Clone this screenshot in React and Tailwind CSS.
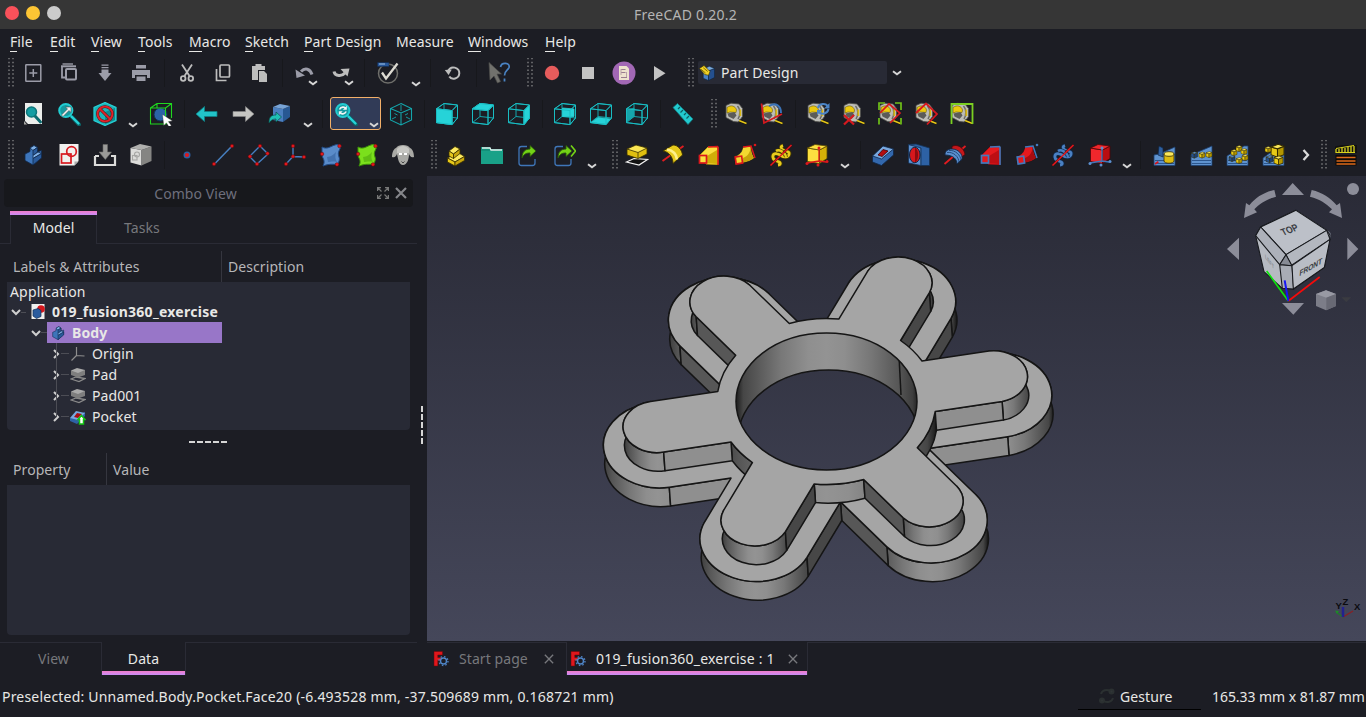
import React from "react";

const C = "#26d3d8";
const CD = "#14a5ab";

/* ---------- shared icon pieces (24x24 grid) ---------- */
const Wire = ({ face, hi = C }) => (
  <>
    <g fill="none" stroke={CD} strokeWidth="1">
      <path d="M9 1.500 22.500 3v13L9 14.500z" />
      <path d="M1.500 6.800 17 8.600v14L1.500 20.600zM1.500 6.800 9 1.500M17 8.600 22.500 3M17 22.600l5.500-6.600M1.500 20.600 9 14.500" />
    </g>
    {face && <path d={face} fill={hi} stroke={hi} strokeWidth=".8" />}
    <path d="M1.500 6.800 17 8.600v14L1.500 20.600zM1.500 6.800 9 1.500 22.500 3 17 8.600M22.500 3v13L17 22.600" fill="none" stroke="#19bcc2" strokeWidth="1" />
  </>
);

const Tape = () => (
  <>
    <path d="M2 3.500 7 1.200l8 .8 3.500 4.500v8l-4 5.500-5-.5-7.500-4z" fill="#bdbdb8" stroke="#4c4c47" strokeWidth=".8" />
    <path d="M3 5.500c4-3 8.500-1.500 9.500 2.500l-.5 2.500-6-.5-3 1z" fill="#ecc90f" stroke="#6b5c00" strokeWidth=".6" />
    <path d="M3.500 11.500l7-1.500 2 3.500-3 3.500-5-2.500z" fill="#5b5b58" />
    <path d="M13.500 4c3 3 3 9 .5 13" fill="none" stroke="#6b6b64" strokeWidth="1.500" />
    <path d="M16.300 7.500v6.500" stroke="#d8b610" strokeWidth="1.700" />
    <path d="M15 18.500l7.500 3" stroke="#16150a" strokeWidth="2.800" />
    <path d="M15 18.500l7.500 3" stroke="#e5c619" strokeWidth="1.500" />
  </>
);

const Step = ({ a, b, c, s }) => (
  <g stroke={s} strokeWidth=".8" strokeLinejoin="round">
    <path d="M4 11 9 8.500V5l4-2.500 3.500 2V9l4-1.500V14L12 22l-8-4.500z" fill={b} />
    <path d="M9 5l4-2.500 3.500 2-4.500 3z" fill={a} />
    <path d="M12 7.500l4.500-3V9L12 12.500z" fill={c} />
    <path d="M12 12.500 17 9l3.500 1.500L12 15.500z" fill={a} />
    <path d="M12 15.500l8.500-5V15L12 22z" fill={c} />
  </g>
);

const Bricks = () => (
  <g stroke="#3a3000" strokeWidth=".8" strokeLinejoin="round">
    <path d="M3.500 15 14 9.500l6.500 4L11 19z" fill="#fdea60" />
    <path d="M3.500 15l7.500 4v4l-7.500-4z" fill="#e8c91a" />
    <path d="M11 19l9.500-5.500v4L11 23z" fill="#c9a70c" />
    <path d="M5 8 11 3.500l5 2.500-6.500 5z" fill="#fdea60" />
    <path d="M5 8l4.500 3v4.500L5 13z" fill="#e8c91a" />
    <path d="M9.500 11 16 6v4.500l-6.500 5z" fill="#c9a70c" />
  </g>
);

const BlueCube = () => (
  <g stroke="#0d2038" strokeWidth=".7">
    <path d="M7 7l7 2v13l-7-3z" fill="#4b82c5" />
    <path d="M14 9l8-3v12l-8 4z" fill="#24508f" />
    <path d="M7 7l8-4 7 3-8 3z" fill="#7aa9dc" />
  </g>
);

const Glass = () => (
  <>
    <path d="M15 15l7 7.500" stroke="#0b6367" strokeWidth="4" strokeLinecap="round" />
    <path d="M14.500 14.500l7 7" stroke={C} strokeWidth="2.400" strokeLinecap="round" />
    <circle cx="8.800" cy="8.500" r="6.600" fill="#149aa0" stroke="#22cdd2" strokeWidth="2" />
  </>
);

const No = ({ x = 12, y = 12, r = 8 }) => (
  <g fill="none" stroke="#e0242b" strokeWidth="1.900">
    <circle cx={x} cy={y} r={r} stroke="#5e090b" strokeWidth="2.900" />
    <path d={`M${x - r * 0.7} ${y - r * 0.7}L${x + r * 0.7} ${y + r * 0.7}`} stroke="#5e090b" strokeWidth="2.900" />
    <circle cx={x} cy={y} r={r} />
    <path d={`M${x - r * 0.7} ${y - r * 0.7}L${x + r * 0.7} ${y + r * 0.7}`} />
  </g>
);

const Pt = ({ x, y, r = 1.8 }) => <circle cx={x} cy={y} r={r} fill="#e3171c" stroke="#5c0608" strokeWidth=".5" />;

const SmallCube = ({ x, y, s, a = "#fbe75a", b = "#e8c916", c = "#b39600" }) => (
  <g transform={`translate(${x} ${y}) scale(${s})`} stroke="#332a00" strokeWidth=".8">
    <path d="M0 3l5 1.500V11L0 9z" fill={b} />
    <path d="M5 4.500 10 2.500V9l-5 2z" fill={c} />
    <path d="M0 3 5.500 1 10 2.500 5 4.500z" fill={a} />
  </g>
);

const PatBase = ({ d = "M1 13l21-10v20H1z" }) => <path d={d} fill="#5f93cf" stroke="#1c3f70" strokeWidth=".8" />;
const patStripes = <path d="M2 20.500h19M2 17.500h19" stroke="#264f86" strokeWidth=".9" />;

const Loft = ({ fill, side, line }) => (
  <>
    <path d="M2 13 11 4h10v17.500L9 21z" fill={fill} stroke={side} strokeWidth=".8" />
    <path d="M10 13 20 7v14L10 20z" fill={side} />
    <path d="M21 3.500v18.500M11 4l10-.5" stroke={line} strokeWidth="1.600" />
    <rect x="2.500" y="12.500" width="7" height="7.500" fill={fill} stroke={line} strokeWidth="1.700" />
  </>
);

const Dot = ({ x, y, c }) => <circle cx={x} cy={y} r="1.300" fill={c} />;
const Pipe = ({ fill, side, line }) => (
  <>
    <path d="M2 13C8 12 9 7 10 4L18 3c0 6 2 9 3 12-2 2-6 4-12 5l-7 1z" fill={fill} stroke="#151515" strokeWidth=".7" />
    <path d="M10 15C16 13 17 8 18 4c0 6 1 8 3 11-3 2-7 4-11 4.500z" fill={side} />
    <rect x="2.500" y="13.500" width="6.500" height="7" fill={fill} stroke={line} strokeWidth="1.700" transform="rotate(-8 6 16)" />
    <path d="M10 4 18 3l4 12" fill="none" stroke={line} strokeWidth="1.500" />
    <Dot x={22} y={2} c={line} />
  </>
);

const Helix = ({ c, d }) => (
  <>
    <g fill="none">
      <path d="M14 2.500c-3 1-2 4 1 5s6 1 5 4-5 3-8 1-7-3-8 0 2 5 5 6 3 3 0 3.500" stroke={d} strokeWidth="4.400" />
      <path d="M14 2.500c-3 1-2 4 1 5s6 1 5 4-5 3-8 1-7-3-8 0 2 5 5 6 3 3 0 3.500" stroke={c} strokeWidth="2.800" />
      <path d="M7 8c3-2 9 1 10 6" stroke={d} strokeWidth="3.800" />
      <path d="M7 8c3-2 9 1 10 6" stroke={c} strokeWidth="2.400" />
    </g>
    <path d="M1.500 22.500 10 14M14 10l8.500-8" stroke="#560709" strokeWidth="2.200" />
    <path d="M1.500 22.500 22.500 2" stroke="#e21b20" strokeWidth="1.400" />
  </>
);

const PrimCube = ({ a, b, c, line, dot }) => (
  <>
    <path d="M2.500 5l12 2v13.500L2.500 18.500z" fill={a} stroke={c} strokeWidth=".8" />
    <path d="M14.500 7 22 3v12.500l-7.500 5z" fill={b} stroke={c} strokeWidth=".8" />
    <path d="M2.500 5 10 1.500 22 3l-7.500 4z" fill={a} stroke={c} strokeWidth=".8" />
    <path d="M14 5v13M14 18 2 20M14 18l7 1" stroke={line} strokeWidth="1.300" />
    {[[14, 5], [2, 20.5], [22, 18.5], [13, 22]].map(([x, y]) => <circle key={x} cx={x} cy={y} r="1.500" fill={dot} />)}
  </>
);

const MeshPatch = ({ a, b }) => (
  <>
    <path d="M3 4c5 3 9-1 13-2 3-1 6 0 6 1-1 4-4 6-2 11 1 2 0 4-1 7-4 1-7-1-15 2 3-6-1-8-1-11z" fill={a} stroke={b} strokeWidth="1" />
    <path d="M8 14c4 0 7-3 9-5-1 4-1 7 1 10-4-1-7 0-9 0z" fill={b} opacity=".4" />
    <Pt x="20.500" y="3" /><Pt x="3" y="11" /><Pt x="18" y="21.500" />
  </>
);

const ArrowBox = ({ two }) => (
  <>
    <path d="M11 3.500H5.500Q3 3.500 3 6v14q0 2.500 2.500 2.500h11Q19 22.500 19 20v-4" fill="none" stroke="#3f76b8" strokeWidth="1.300" />
    <path d="M6 15c0-6 3-9 8-9V2.500l6 5.500-6 5.500v-3.500c-4 0-6 1-8 5z" fill="#73d216" stroke="#28560a" strokeWidth=".9" />
    {two && <path d="M19 2.500l4.500 5.500-4.500 5.500" fill="none" stroke="#73d216" strokeWidth="1.600" />}
  </>
);

const G1 = "#9b9ca8";
const G2 = "#bdbdbd";

const icons = {
  new: <><rect x="4.800" y="3.800" width="15" height="16.500" fill="none" stroke={G1} strokeWidth="1.500" rx=".5" /><path d="M12.300 8v8M8.300 12h8" stroke={G1} strokeWidth="1.500" /></>,
  open: <><path d="M5.500 3H16" stroke={G1} strokeWidth="1.400" /><path d="M5 5v11.500h3" fill="none" stroke={G1} strokeWidth="1.800" /><path d="M4 5.300h15" stroke={G1} strokeWidth="2" /><rect x="9" y="8" width="10" height="10.500" rx="1" fill="none" stroke={G1} strokeWidth="2" /></>,
  save: <path d="M8.500 3.500h7v1.300h-7zM8.500 6h7v1.300h-7zM8.500 8.400h7V12H18.500l-6.500 8-6.500-8h3z" fill={G1} />,
  print: <path d="M7 4h10v3.500H7zM3 9h18v8h-3v-3H6v3H3zM7.500 15.500h9V20h-9z" fill={G1} />,
  cut: <g fill="none" stroke={G2} strokeWidth="1.800"><path d="M7 3.500l7.500 11.500M17 3.500 9.500 15" /><circle cx="8.200" cy="17.500" r="2.300" /><circle cx="15.800" cy="17.500" r="2.300" /></g>,
  copy: <g fill="none" stroke={G2} strokeWidth="1.700"><rect x="9" y="4" width="9.500" height="12" rx="1" /><path d="M5.500 8v11.500h10" /></g>,
  paste: <><path d="M5 5h3.500V3h6v2H18v4h-7v10H5z" fill={G2} /><path d="M12 10h5l3 3v8h-8z" fill={G2} /></>,
  undo: <><path d="M8 10.500c4-4 9-3 11 3" fill="none" stroke={G1} strokeWidth="3" /><path d="M2.500 8.500l1 8.500 8.500-2.500z" fill={G1} /></>,
  redo: <><path d="M5 10.500c1 5 8 5 11 1.500" fill="none" stroke={G2} strokeWidth="3" /><path d="M11.500 8l9-.5-2 8z" fill={G2} /></>,
  check: <><circle cx="12" cy="12.500" r="9.500" fill="none" stroke="#6e6e6a" strokeWidth="1.500" /><path d="M1.500 1.500H13v4H1.500z" fill="#27579b" stroke="#10294b" strokeWidth=".5" /><path d="M3 3h6" stroke="#8fb4dd" strokeWidth="1.200" /><path d="M6 11.500l4 6L21.500 2.500" fill="none" stroke="#dcdad2" strokeWidth="2.300" /></>,
  refresh: <><path d="M8.300 15.500c2.500 4 9.500 2.500 10-3 .3-6-8.500-9-11.500-2" fill="none" stroke={G2} strokeWidth="2" /><path d="M3.800 9l7-.5-3.200 5.500z" fill={G2} /></>,
  whatis: <><path d="M2 1.500 14.500 13H10l3.500 7.500-3 1.500L7 15l-4 4z" fill="#71716d" stroke="#4e4e4a" strokeWidth=".7" /><path d="M13.500 6c1-5.500 10-4.500 8.500.5-1 3-4.500 3-4.500 8" fill="none" stroke="#4a83c3" strokeWidth="1.700" /><path d="M17.500 17.500v3" stroke="#4a83c3" strokeWidth="1.800" /></>,
  rec: <circle cx="12" cy="12" r="7.200" fill="#e65c5c" />,
  stop: <rect x="6" y="6" width="12" height="12" fill="#c3c3c3" />,
  macro: <><circle cx="12" cy="12" r="11.500" fill="#a268b5" /><path d="M7 5h7.500L17 7.500V19H7z" fill="#eee3ce" /><path d="M9 8.500h4.500M9 11.500h4.500M9 16.500h6" fill="none" stroke="#9a7d8f" strokeWidth="1.100" /><path d="M9 8v6M14.500 11v5" stroke="#b9a3a8" strokeWidth="1" /></>,
  play: <path d="M6 5v14.500l11.500-7.300z" fill="#c3c3c3" />,

  fitall: <><path d="M4 1h17v21H7l-3-3z" fill="#eceeec" /><path d="M3 19l3 3.500H3z" fill="#a9aaa6" /><path d="M14 14l5.500 6" stroke="#0d6b70" strokeWidth="3" strokeLinecap="round" /><circle cx="10.500" cy="10" r="5" fill="#159da3" stroke="#0e767a" strokeWidth="1.500" /></>,
  fitsel: <><Glass /><path d="M4.500 13l6-6-2-2H14v5.500l-2-2-6 6z" fill="#f3f3f3" stroke="#4c5252" strokeWidth=".6" /></>,
  drawstyle: <><path d="M12 .5l11 5v13l-11 5-11-5v-13z" fill="#1db3b8" stroke={C} strokeWidth="1.200" /><path d="M12 10l10-4v12l-10 4z" fill="#12888d" /><No r={7.4} /></>,
  selcube: <><circle cx="11.500" cy="12.500" r="6.500" fill="#2b62a6" stroke="#123258" /><g fill="none" stroke="#1fd81f" strokeWidth="1.100"><path d="M1.500 6h15v16h-15zM8 1.500h14.500V16M1.500 6 8 1.500M16.500 6l6-4.500M8 1.500V6M16.500 22l5-5" /></g><path d="M13.500 12.500l10 6.500-4.200.6 3 4-2.300 1.200-2.600-4-2.600 2.700z" fill="#fff" stroke="#333" strokeWidth=".3" /></>,
  back: <path d="M1 12l8.500-7.500v5H22v5H9.500v5z" fill="#22c3c8" stroke="#0e8085" strokeWidth=".8" />,
  fwd: <path d="M23 12l-8.500-7.500v5H2v5h12.500v5z" fill="#c5c5c2" stroke="#888" strokeWidth=".6" />,
  linkcube: <><path d="M5 5l10 2v13L5 18z" fill="#4b7fc0" /><path d="M15 7l7-3v11l-7 5z" fill="#285893" /><path d="M5 5l7-3 10 2-7 3z" fill="#78a4d6" /><path d="M1 21c0-6 2-8 7-8v-3l5.500 5L8 20v-3c-3 0-5 1-7 4z" fill="#1fc0b5" stroke="#08504c" strokeWidth=".7" /></>,
  zoomsync: <><Glass /><path d="M5.500 7.500c1.500-3 5-3 6.500-1M12.200 9.500c-1.500 3-5 3-6.500 1" stroke="#f1f5f5" strokeWidth="1.600" fill="none" /><path d="M12.800 3.800v3.900h-3.900zM4.800 13.200V9.300h3.900z" fill="#f1f5f5" /></>,
  iso: <g fill="none" stroke={CD} strokeWidth="1.100"><path d="M12 1.500l10.500 5v11.500L12 23 1.500 18V6.500zM1.500 6.500 12 11l10.500-4.500M12 11v12" /><path d="M12 3v6M3 17l4-2M21 17l-4-2M5.500 11.500l3 1.500M16 13l3-1.500" strokeWidth=".9" /></g>,
  front: <Wire face="M1.500 6.800 17 8.600v14L1.500 20.600z" />,
  top: <Wire face="M1.500 6.800 9 1.500 22.500 3 17 8.600z" />,
  right: <Wire face="M17 8.600 22.500 3v13L17 22.600z" />,
  rear: <Wire face="M9.500 6 21 7v7.500L9.500 14.500z" />,
  bottom: <Wire face="M2.500 20.300 9 15.500l12.500 1.500-4.500 5z" />,
  left: <Wire hi="#16a5ab" face="M2 8 9 6v8.500L2 19.500z" />,
  ruler: <><path d="M2 5.500 6.500 1.500 22 17l-5 5.500z" fill="#22c9ce" stroke="#0f7f84" strokeWidth=".8" /><path d="M9 5l-2 2M12 8l-2.500 2.500M15 11l-2 2M18 14l-2.500 2.500" stroke="#0d5e62" strokeWidth="1.200" /></>,
  tape: <Tape />,
  tapeAngle: <><Tape /><path d="M9 4c7-4 12 0 12 7" fill="none" stroke="#3b73b7" strokeWidth="2" /><path d="M1.500 1.500 4 21l18-9" fill="none" stroke="#d6191f" strokeWidth="1.800" /></>,
  tapeRef: <><Tape /><path d="M12 6c1-5 8-5 10-1.500M22.500 7c-1 5-7 6-10 3" fill="none" stroke="#4b84c6" strokeWidth="2" /><path d="M23.500 1v5.500H18zM11 13V8h5z" fill="#4b84c6" /></>,
  tapeX: <><Tape /><path d="M2 13l10 9.500M12 13 2 22.500" stroke="#d6191f" strokeWidth="2.300" /></>,
  tapeAll: <><Tape /><path d="M1 8V1h6M17 1h6v7M1 16v6.500M23 16v6.500" stroke="#6fc018" strokeWidth="1.700" fill="none" /><path d="M2 11 11 2l11 9-10 10" fill="none" stroke="#d6191f" strokeWidth="1.700" /></>,
  tape3d: <><Tape /><path d="M2 11 12 1.500 23 12 13 22.500" fill="none" stroke="#d6191f" strokeWidth="1.800" /></>,
  tapeDelta: <><Tape /><path d="M1.500 22V2h21v20" fill="none" stroke="#7bcf22" strokeWidth="1.800" /></>,

  body: <Step a="#7fb0e6" b="#3d75ba" c="#2a5a9a" s="#10284a" />,
  sketch: <><path d="M2.500 1h19v17l-4 4.500h-15z" fill="#f1f1ef" /><path d="M21.500 18.500h-4v4z" fill="#aaa" /><g fill="none" stroke="#d7191f" strokeWidth="1.700"><rect x="4.500" y="11" width="9.500" height="9" /><circle cx="14.500" cy="8.500" r="4.800" /></g></>,
  attach: <><path d="M2 13v9h20v-9h-4M2 13h4" fill="none" stroke="#dcdcda" strokeWidth="2.200" /><path d="M10 1.500h4.500V9h4l-6.200 7.500L6 9h4z" fill="#9b9b99" stroke="#6b6b69" strokeWidth=".6" /></>,
  sketchcube: <><path d="M1.500 5l11 2v15.500l-11-3z" fill="#dcdcda" /><path d="M12.500 7l10-3.500V18l-10 4.500z" fill="#858583" /><path d="M1.500 5 11 1l11.500 2.500L12.500 7z" fill="#b0b0ae" /><rect x="3.500" y="12.500" width="4.500" height="4.500" fill="none" stroke="#a6a6a4" strokeWidth="1.100" /><circle cx="8" cy="11.500" r="2.500" fill="none" stroke="#a6a6a4" strokeWidth="1.100" /></>,
  point: <><circle cx="12" cy="12" r="3.500" fill="#2c5f9f" /><circle cx="12" cy="12" r="2" fill="#e3171c" /></>,
  line: <><path d="M3 21.500 21 3" stroke="#477fc0" strokeWidth="1.500" /><Pt x="3" y="21" /><Pt x="21" y="3" /></>,
  plane: <><path d="M13 3l8 8L10 21 2.500 13.500z" fill="none" stroke="#477fc0" strokeWidth="1.400" /><Pt x="13" y="3" /><Pt x="20.500" y="10.500" /><Pt x="10" y="21" /><Pt x="3" y="13.500" /></>,
  lcs: <><path d="M10 3v10.500l11 .5M10 13.500 3 21" fill="none" stroke="#477fc0" strokeWidth="1.400" /><Pt x="10" y="3" /><Pt x="10" y="13.500" /><Pt x="21" y="14" /><Pt x="3" y="21" /></>,
  shapeB: <MeshPatch a="#5a8cca" b="#204a86" />,
  shapeG: <MeshPatch a="#7be01c" b="#3c8f08" />,
  sheep: <><path d="M5 5c2-4 12-4 14 0 3 1 4 6 4 9-3 1-4-1-5-3 0 5-2 11-6 11S7 16 6 11c-1 2-2 4-5 3 0-3 1-8 4-9z" fill="#a9a9a5" /><path d="M6 6c3-4 9-4 12 0v4H6z" fill="#c6c6c2" /><path d="M8 11h3M13 11h3" stroke="#fff" strokeWidth="2.200" /><path d="M10.500 18.500l1.500 1.500 1.500-1.500" stroke="#444" fill="none" /></>,
  ybody: <Bricks />,
  folder: <><path d="M1 4h9l1 2h12v15H1z" fill="#13907a" /><path d="M1 8h22v13H1z" fill="#19a188" /><path d="M2 5h8l1 2h11" stroke="#e2f1ee" strokeWidth="1.300" fill="none" /></>,
  link: <ArrowBox />,
  linkG: <ArrowBox two />,
  pad: <><path d="M1.500 19 9 15.500l13.500 1L14 22z" fill="#111" stroke="#f2f2f2" strokeWidth="1.200" /><path d="M2 6v6l11 3.500 9-4.500V5z" fill="#e0bf10" stroke="#3a3000" strokeWidth=".8" /><path d="M2 6 11 2l11 3-9 4.500z" fill="#fbe653" stroke="#3a3000" strokeWidth=".8" /><path d="M13 9.500v6" stroke="#3a3000" strokeWidth=".8" /></>,
  revolve: <><path d="M1.500 18 22.500 3" stroke="#df1c20" strokeWidth="1.900" /><path d="M2 8 12 2c5 0 9 5 9.500 10L12 20.500C12 14 8 9 2 8z" fill="#e6c91c" stroke="#3a3000" strokeWidth=".9" /><path d="M6 6.500c6 1 9.500 5 10 10" fill="none" stroke="#fff08a" strokeWidth="2.600" /></>,
  loft: <Loft fill="#fbe040" side="#d0ae08" line="#dc171c" />,
  pipe: <Pipe fill="#f3d930" side="#c6a50a" line="#dc171c" />,
  helix: <Helix c="#e9cc1d" d="#473b00" />,
  prim: <PrimCube a="#fce040" b="#d4b008" c="#5c4a00" line="#dc171c" dot="#dc171c" />,
  pocket: <><path d="M1.500 13v6l9 3.500L22.500 12V6z" fill="#3368ad" stroke="#0e2646" strokeWidth=".8" /><path d="M1.500 13 12 3l10.500 3L10.500 16z" fill="#78a8df" stroke="#0e2646" strokeWidth=".8" /><path d="M7 12l5-5.500L17 8l-6 5.500z" fill="#b40d11" stroke="#3c0304" strokeWidth=".8" /></>,
  hole: <><path d="M1.500 1.500 14 3v19.500L1.500 20z" fill="#5b90d0" stroke="#143154" strokeWidth=".8" /><path d="M1.500 1.500 9 1l13.500 4v17.500H14V5z" fill="#2d61a4" stroke="#143154" strokeWidth=".8" /><ellipse cx="7.800" cy="12" rx="5.300" ry="7.700" fill="#d6171c" stroke="#0e2646" /><path d="M8 4.500c4 2 4 13 0 15" fill="#8c0b0f" /></>,
  groove: <><path d="M1.500 21 22.500 3" stroke="#e21b20" strokeWidth="1.800" /><path d="M9 3.500c5-3 12 1 13 8l-4 3L9 9z" fill="#c4171b" stroke="#4e0608" strokeWidth=".8" /><path d="M2 12c0-4 3-6 7-6 6 0 11 5 10 10l-5 5c0-5-4-9-12-9z" fill="#5b8fce" stroke="#12294a" strokeWidth=".9" /><path d="M4 9.500c6-1 12 4 12 10M6 7.500c6-1 12 5 12 10" stroke="#183a66" fill="none" strokeWidth=".8" /></>,
  sloft: <Loft fill="#e5191e" side="#bd0e13" line="#4379bd" />,
  spipe: <Pipe fill="#e5191e" side="#a90c10" line="#4379bd" />,
  shelix: <Helix c="#4a80c2" d="#10284a" />,
  sprim: <PrimCube a="#f0272c" b="#b90d11" c="#4e0608" line="#3f77bb" dot="#5b8fce" />,
  mirror: <><PatBase d="M1 12l5-1 16-7v18.500H1z" />{patStripes}<path d="M6 3l4 2v9l-5-2z" fill="#2e5f9f" stroke="#0e2646" strokeWidth=".7" /><path d="M2 21 22 8" stroke="#d6171c" strokeWidth="1.800" strokeDasharray="4 9" /><path d="M11 11v7c0 3 10 3 10 0v-7z" fill="#dcbc12" stroke="#332a00" strokeWidth=".8" /><ellipse cx="16" cy="11" rx="5" ry="2.300" fill="#fbe85c" stroke="#332a00" strokeWidth=".8" /></>,
  linpat: <><PatBase d="M1 12 22 3v19.500H1z" />{patStripes}<SmallCube x={1} y={8} s={0.65} a="#5b8fce" b="#24508f" c="#1a3f75" /><SmallCube x={9} y={8.5} s={0.6} /><SmallCube x={16} y={8} s={0.6} /></>,
  polpat: <><PatBase d="M1 13 18 3h4v19.500H1z" />{patStripes}<SmallCube x={3} y={12} s={0.6} a="#5b8fce" b="#24508f" c="#1a3f75" /><SmallCube x={5} y={6} s={0.6} /><SmallCube x={10} y={2} s={0.6} /><SmallCube x={15} y={5} s={0.6} /><SmallCube x={16} y={11} s={0.6} /><SmallCube x={10} y={14} s={0.6} /></>,
  multi: <><PatBase d="M1 15 16 4h6v18.500H1z" />{patStripes}<SmallCube x={9} y={0} s={1.3} /><SmallCube x={3} y={3} s={0.6} /><SmallCube x={4} y={12} s={0.7} a="#5b8fce" b="#24508f" c="#1a3f75" /><SmallCube x={12} y={12} s={0.9} /></>,
  gear: <><path d="M1 3.500 8 2h15v8H1z" fill="#111" /><path d="M2 6v4M5 6v4M8 5v5M11 5v5M14 4v6M17 3v7M20 3v7" stroke="#d8d21d" strokeWidth="1.300" /><path d="M2 5.500 20 2.500M2 9.500h19" stroke="#d8d21d" strokeWidth="1" /><rect x="1.500" y="12" width="21" height="10.500" fill="#0d0a08" /><path d="M2.500 14.500h19M2.500 18h19M2.500 21h19" stroke="#dd6a1a" strokeWidth="1.300" /></>,
  part: <><BlueCube /><g transform="translate(2 1)"><path d="M0 5 6 1l8 8-2 5-5-1z" fill="#f3d223" stroke="#3a3000" strokeWidth=".8" /><path d="M2 6l6 5M5 4l6 5" stroke="#3a3000" strokeWidth=".8" /></g></>,
};

const Svg = ({ n, className = "size-6" }) => (
  <svg viewBox="0 0 24 24" className={`${className} shrink-0`}>{icons[n]}</svg>
);
const Chev = ({ className = "" }) => (
  <svg viewBox="0 0 10 6" className={`h-1.5 w-2.5 shrink-0 ${className}`}>
    <path d="M1 1.200l4 3 4-3" fill="none" stroke="#d6d6d6" strokeWidth="2" />
  </svg>
);

/* ---------- toolbar building blocks ---------- */
const Btn = ({ n, w = "w-9" }) => (
  <div className={`${w} flex h-full shrink-0 items-center justify-center`}><Svg n={n} /></div>
);
const BtnDrop = ({ n }) => (
  <div className="relative flex h-full w-9 shrink-0 items-center justify-center">
    <Svg n={n} />
    <Chev className="absolute top-[28px] right-[5px]" />
  </div>
);
const Drop = ({ w = "w-5" }) => <div className={`${w} flex h-full shrink-0 items-end justify-center pb-[6px]`}><Chev /></div>;
const Sep = () => <div className="flex h-full w-2.5 shrink-0 items-center justify-center"><div className="h-7 w-px bg-[#17181c]" /></div>;
const Handle = ({ w }) => (
  <div className={`${w} flex h-full shrink-0 items-center justify-end pr-px`}>
    <svg viewBox="0 0 6 29" className="h-[29px] w-1.5">
      {Array.from({ length: 8 }, (_, i) => (
        <path key={i} d={`M0 ${i * 3.9 + 0.5}h2M4 ${i * 3.9 + 0.5}h2`} stroke="#606164" strokeWidth="1.500" />
      ))}
    </svg>
  </div>
);
const Btns = ({ list }) => list.split(" ").map((n) => <Btn key={n} n={n} />);

const menus = [
  ["File", "w-10"], ["Edit", "w-[41px]"], ["View", "w-[47px]"], ["Tools", "w-[51px]"], ["Macro", "w-14"],
  ["Sketch", "w-[59px]"], ["Part Design", "w-[92px]"], ["Measure", "w-[72px]", true], ["Windows", "w-[77px]"], ["Help", "w-10"],
];

/* ---------- 3D model ---------- */
const K = 0.757;
const CX = 826.5;
const CY = 401.5;
const H = 18.7;
const LEAN = 1.3 / H;
const RING = 109.5;
const arms = [[169, -25.3], [103.5, 100.5], [-72, 119.5], [-169.4, 25.3], [-103.5, -100.5], [72, -119.5]].map(([x, y]) => {
  const Y = y / K;
  const l = Math.hypot(x, Y);
  return { c: [x, Y], u: [x / l, Y / l] };
});
const shades = [[-1, 38], [-0.95, 62], [-0.8, 86], [-0.5, 118], [-0.2, 142], [0, 147], [0.2, 143], [0.5, 120], [0.75, 90], [0.92, 70], [1, 28]];
const shadeAt = (x) => {
  for (let i = 1; i < shades.length; i++) {
    if (x <= shades[i][0]) {
      const [a, p] = shades[i - 1];
      const [b, q] = shades[i];
      const v = Math.round(p + ((q - p) * (x - a)) / (b - a));
      return `rgb(${v},${v},${v})`;
    }
  }
  return "rgb(40,40,40)";
};
const scr = (p, dy) => [CX + p[0] + dy * LEAN, CY + p[1] * K + dy];
const str = (p, dy) => scr(p, dy).map((v) => v.toFixed(1)).join(" ");
const off = (a, s, r) => [a.c[0] - s * a.u[1] * r, a.c[1] + s * a.u[0] * r];
const meet = (a, b, r) => {
  const p = off(a, 1, r);
  const q = off(b, -1, r);
  const d = a.u[0] * b.u[1] - a.u[1] * b.u[0];
  const t = ((q[0] - p[0]) * b.u[1] - (q[1] - p[1]) * b.u[0]) / d;
  return [p[0] + a.u[0] * t, p[1] + a.u[1] * t];
};
const onRing = (a, s, r) => {
  const t = Math.sqrt(RING * RING - r * r);
  return [a.u[0] * t - s * a.u[1] * r, a.u[1] * t + s * a.u[0] * r];
};

function Layer({ r, dy, ring }) {
  const n = arms.length;
  const parts = arms.map((a, i) => {
    const s = ring ? onRing(a, -1, r) : meet(arms[(i + n - 1) % n], a, r);
    const e = ring ? onRing(a, 1, r) : meet(a, arms[(i + 1) % n], r);
    return { a, s, e, t0: off(a, -1, r), t1: off(a, 1, r) };
  });
  const arc = (rr, sw, p, d) => `A${rr} ${rr * K} 0 0 ${sw} ${str(p, d)}`;
  let top = "";
  parts.forEach((p, i) => {
    top += i === 0 ? `M${str(p.s, dy)}` : ring ? arc(RING, 1, p.s, dy) : `L${str(p.s, dy)}`;
    top += `L${str(p.t0, dy)}${arc(r, 1, p.t1, dy)}L${str(p.e, dy)}`;
  });
  if (ring) top += arc(RING, 1, parts[0].s, dy);
  top += "Z";
  const quad = (p, q) => `M${str(p, dy)}L${str(q, dy)}L${str(q, dy + H)}L${str(p, dy + H)}Z`;
  const id = ring ? "upper" : "lower";
  return (
    <g stroke="#151515" strokeWidth="1.500" strokeLinejoin="round">
      <defs>
        {parts.map(({ a }, i) => (
          <ShadeGradient key={i} id={`${id}${i}`} x1={CX + a.c[0] - r} x2={CX + a.c[0] + r + 1.5} />
        ))}
      </defs>
      {ring && parts.map((p, i) => {
        const q = parts[(i + 1) % n].s;
        if (p.e[1] + q[1] < 30) return null;
        return <path key={i} fill="url(#ring)" d={`M${str(p.e, dy)}${arc(RING, 1, q, dy)}L${str(q, dy + H)}${arc(RING, 0, p.e, dy + H)}Z`} />;
      })}
      {parts.map((p, i) => (
        <g key={i}>
          <path fill={`url(#${id}${i})`} d={`M${str(p.t0, dy)}${arc(r, 1, p.t1, dy)}L${str(p.t1, dy + H)}${arc(r, 0, p.t0, dy + H)}Z`} />
          {-p.a.u[0] > 0 && <path fill={shadeAt(p.a.u[1])} d={quad(p.s, p.t0)} />}
          {p.a.u[0] > 0 && <path fill={shadeAt(-p.a.u[1])} d={quad(p.e, p.t1)} />}
        </g>
      ))}
      <path d={top} fill="#a5a5a5" />
    </g>
  );
}
const ShadeGradient = ({ id, x1, x2, flip }) => (
  <linearGradient id={id} gradientUnits="userSpaceOnUse" x1={flip ? x2 : x1} x2={flip ? x1 : x2} y1="0" y2="0">
    {shades.map(([p]) => <stop key={p} offset={(p + 1) / 2} stopColor={shadeAt(p)} />)}
  </linearGradient>
);

const NavCube = () => (
  <g transform="translate(1210 175) scale(.33333)">
    <g fill="#8c8d99">
      <path d="M216 60l32-36 34 36zM216 384h66l-32 35zM51 222l36-34v67zM445 222l-33-34v67z" />
      <circle cx="429" cy="42" r="18" />
      <path d="M193 45l5 20c-30 8-48 20-65 38l8 9-39 17 6-45 10 7c20-24 42-38 75-46zM305 45l-5 20c30 8 48 20 66 38l-9 9 39 17-6-45-10 7c-20-24-42-38-75-46z" />
      <path d="M318 357l30-11 30 11v36l-30 13-30-13z" fill="#7c7d88" />
      <path d="M318 357l30-11 30 11-29 11z" fill="#9899a3" />
      <path d="M349 368l29-11v36l-29 13z" fill="#686974" />
    </g>
    <circle cx="350" cy="180" r="13" fill="#6d7280" />
    <g stroke="#16181c" strokeWidth="3.200" strokeLinejoin="round">
      <path d="M258 106 152 156 137 182 162 290 217 340 250 342 343 277 360 180 350 166z" fill="#b6bac2" />
      <path d="M152 156 258 106l92 60-122 73z" fill="#bcc0c8" />
      <path d="M228 239 350 166l10 27-116 78z" fill="#b3b7bf" />
      <path d="M228 239 152 156l-15 26 72 87z" fill="#adb1ba" />
      <path d="M228 239 209 269l37 3z" fill="#878b95" />
      <path d="M209 269l37 3 5 70-34-2z" fill="#a8acb5" />
      <path d="M246 272l114-79-17 84-93 65z" fill="#b9bdc5" />
    </g>
    <g fontFamily="'Liberation Sans', sans-serif" fontWeight="700" fill="#3a3d43">
      <text transform="matrix(.78 -.28 .5 .9 220 182)" fontSize="30">TOP</text>
      <text transform="matrix(.8 -.46 -.1 1 268 304)" fontSize="25" letterSpacing="-.5">FRONT</text>
      <text transform="matrix(.55 .7 .1 1 166 250)" fontSize="19" opacity=".45">LEFT</text>
    </g>
    <g strokeWidth="5">
      <path d="M235 378l-65-90" stroke="#0ce80c" />
      <path d="M235 378l94-72" stroke="#f50a0a" />
      <path d="M235 378l-11-62" stroke="#1515f5" strokeWidth="6" />
    </g>
    <path d="M394 367h30l-15 15z" fill="#3a3b41" />
  </g>
);

const Viewport = () => (
  <svg viewBox="427 176 939 465" className="block h-[465px] w-[939px]">
    <defs>
      <linearGradient id="bg" gradientUnits="userSpaceOnUse" x1="0" x2="0" y1="176" y2="641">
        <stop offset="0" stopColor="#292a36" />
        <stop offset="1" stopColor="#45475a" />
      </linearGradient>
      <ShadeGradient id="ring" x1={CX - RING} x2={CX + RING} />
      <ShadeGradient id="wall" x1={CX - 90.5} x2={CX + 90.5} flip />
      <clipPath id="holeClip"><ellipse cx={CX} cy={CY} rx="90.500" ry="68.500" /></clipPath>
    </defs>
    <rect x="427" y="176" width="939" height="465" fill="url(#bg)" />
    <Layer r={56.3} dy={H} />
    <Layer r={34} dy={0} ring />
    <ellipse cx={CX} cy={CY} rx="90.500" ry="68.500" fill="url(#wall)" />
    <g clipPath="url(#holeClip)" stroke="#151515" strokeWidth="1.500">
      <ellipse cx={CX + 2} cy={CY + 37} rx="90.500" ry="68.500" fill="url(#bg)" />
      <path d="M899 356l2 39" />
    </g>
    <ellipse cx={CX} cy={CY} rx="90.500" ry="68.500" fill="none" stroke="#151515" strokeWidth="1.500" />
    <NavCube />
    <g strokeWidth="1.200">
      <path d="M1343 617l-7-5" stroke="#1f7a2a" />
      <path d="M1335 610.500l4 .5-2 3z" fill="#1f8a2a" />
      <path d="M1343 617l10-6" stroke="#8a1f24" />
      <path d="M1343 617v-10" stroke="#22228f" strokeWidth="2.500" />
    </g>
    <g fontFamily="'Liberation Sans', sans-serif" fontWeight="700" fontSize="9.500" fill="#0b0b10">
      <text x="1335.500" y="609">Y</text><text x="1342.500" y="604.500">Z</text><text x="1354" y="610">X</text>
    </g>
  </svg>
);

/* ---------- tree ---------- */
const TreeChev = ({ down }) => (
  <svg viewBox="0 0 10 10" className="size-2.5 shrink-0">
    <path d={down ? "M1 3l4 4 4-4" : "M3 1l4 4-4 4"} fill="none" stroke="#cfcfcf" strokeWidth="2" />
  </svg>
);
const Dash = ({ w }) => <div className={`${w} h-px shrink-0 bg-[#4c4d55]`} />;
const treeIcons = {
  origin: <path d="M6.500 1v8.500l8 .5M6.500 9.500l-5 5" fill="none" stroke="#8e8e8e" strokeWidth="1.200" />,
  pad: <><path d="M1 12 6 10l9 1.500-6 3z" fill="none" stroke="#8a8a8a" strokeWidth="1.300" /><path d="M1 3.500v4.500l7 2.500 7-2.500V3z" fill="#7e7e7e" /><path d="M1 3.500 7 1l8 2-7 3z" fill="#aaa" /></>,
  pocket: <><path d="M0 9v3l7 3 8-8V3z" fill="#2e62a6" /><path d="M0 9 6 2l9 2-7 7z" fill="#78a8df" /><path d="M4 8l3-4 5 1-4 4z" fill="#a80d11" /><path d="M11.500 6.500l3.500 4h-1.500v4.500h-4v-4.500H8z" fill="#fff" stroke="#12c412" strokeWidth="1.500" /></>,
  doc: <><rect x="1.500" width="13" height="15" fill="#f0f0ee" /><circle cx="11" cy="5" r="3.800" fill="#d6171c" /><path d="M3 6l5-1.500 3 2v6l-4.500 2L3 12z" fill="#2b5c9e" stroke="#122e55" strokeWidth=".7" /></>,
};
const TIcon = ({ n }) => <svg viewBox="0 0 16 16" className="size-4 shrink-0">{treeIcons[n]}</svg>;
const Leaf = ({ n, label }) => (
  <div className="flex h-[21px] items-center pl-11">
    <TreeChev /><Dash w="w-2" /><div className="w-px" /><TIcon n={n} /><span className="ml-1.5">{label}</span>
  </div>
);

const FcIcon = () => (
  <svg viewBox="0 0 16 16" className="size-4 shrink-0">
    <path d="M1 .5h8.500V4H4.800v2.500H8v3H4.800V15H1z" fill="#e0171c" stroke="#6b0609" strokeWidth=".5" />
    <circle cx="10.500" cy="10" r="3" fill="none" stroke="#4f86c8" strokeWidth="1.400" />
    <circle cx="10.500" cy="10" r="4.500" fill="none" stroke="#4f86c8" strokeWidth="1.300" strokeDasharray="1.500 2.030" />
  </svg>
);
const X = ({ className, c = "#77787c", w = 1.6 }) => (
  <svg viewBox="0 0 12 12" className={`${className} shrink-0`}><path d="M1 1l10 10M11 1 1 11" stroke={c} strokeWidth={w} /></svg>
);
const accent = "bg-linear-to-b from-[#f27bc9] to-[#c78cf7]";

export default function App() {
  return (
    <div className="flex h-[717px] w-[1366px] flex-col overflow-hidden bg-[#1c1d24] font-['Noto_Sans',sans-serif] text-[14px] leading-5 tracking-[0.08px] whitespace-nowrap text-[#e8e8e6]">
      <header className="relative flex h-[29px] shrink-0 items-center justify-center bg-[#363636] text-[#b4b4b4]">
        <div className="absolute top-[6px] left-[5px] flex gap-[7px]">
          <div className="size-3.5 rounded-full bg-[#f9515a]" />
          <div className="size-3.5 rounded-full bg-[#fdc534]" />
          <div className="size-3.5 rounded-full bg-[#cbcbcb]" />
        </div>
        <span className="pl-[5px] tracking-[0.24px]">FreeCAD 0.20.2</span>
      </header>

      <nav className="flex h-[23px] shrink-0 items-center pt-0.5 pl-2.5">
        {menus.map(([m, w, plain]) => (
          <div key={m} className={`${w} shrink-0`}>
            <span className={plain ? "" : "border-b border-[#e8e8e6]"}>{m[0]}</span>{m.slice(1)}
          </div>
        ))}
      </nav>

      <div className="flex h-[41px] shrink-0 items-center">
        <Handle w="w-[15px]" /><Btns list="new open save print" /><Sep />
        <Btns list="cut copy paste" /><Sep /><BtnDrop n="undo" /><BtnDrop n="redo" /><Sep />
        <Btn n="check" w="w-[37px]" /><Drop w="w-[19px]" /><Sep /><Btn n="refresh" /><Sep /><Btn n="whatis" w="w-[35px]" />
        <Handle w="w-[18px]" /><Btns list="rec stop macro play" /><Handle w="w-[17px]" />
        <div className="ml-[3px] flex h-[23px] w-[189px] items-center rounded-xs bg-[#282a35] pt-px">
          <Svg n="part" className="size-[18px]" /><span className="ml-[5px]">Part Design</span>
        </div>
        <Chev className="ml-[5px]" />
      </div>

      <div className="flex h-[41px] shrink-0 items-center">
        <Handle w="w-[15px]" /><Btns list="fitall fitsel drawstyle" /><Drop /><Btn n="selcube" /><Sep />
        <Btns list="back fwd" /><Btn n="linkcube" w="w-[37px]" /><Drop w="w-[19px]" /><Sep />
        <div className="mx-[3px] mr-0.5 flex h-[33px] w-[51px] items-center rounded-[3px] border border-[#f3b069] bg-[#313b57] pl-[3px]">
          <Svg n="zoomsync" /><Chev className="mt-[23px] ml-[11px]" />
        </div>
        <Btn n="iso" /><Sep /><Btns list="front top right" /><Sep /><Btns list="rear bottom left" /><Sep />
        <Btn n="ruler" w="w-[35px]" /><Handle w="w-[18px]" /><Btns list="tape tapeAngle" /><Sep />
        <Btns list="tapeRef tapeX tapeAll tape3d tapeDelta" />
      </div>

      <div className="flex h-[41px] shrink-0 items-center">
        <Handle w="w-[15px]" /><Btns list="body sketch attach sketchcube" /><Sep />
        <Btns list="point line plane lcs shapeB shapeG sheep" /><Handle w="w-[17px]" />
        <Btns list="ybody folder link linkG" /><Drop /><Handle w="w-[17px]" />
        <Btns list="pad revolve loft pipe helix prim" /><Drop /><Sep />
        <Btns list="pocket hole groove sloft spipe shelix" /><Btn n="sprim" w="w-[37px]" /><Drop w="w-[17px]" /><Sep />
        <Btn n="mirror" w="w-[39px]" /><Btns list="linpat polpat multi" />
        <div className="flex w-[27px] shrink-0 justify-center">
          <svg viewBox="0 0 8 14" className="h-3.5 w-2"><path d="M1.500 2 6 7l-4.500 5" fill="none" stroke="#dadada" strokeWidth="2.300" /></svg>
        </div>
        <Handle w="w-[9px]" /><Btn n="gear" />
      </div>

      <div className="flex h-[467px] shrink-0 pt-px">
        <aside className="flex w-[417px] shrink-0 flex-col pt-[3px]">
          <div className="ml-1 flex h-[28px] w-[409px] shrink-0 items-center rounded-sm bg-[#17181c] pr-1.5">
            <span className="flex-1 pt-px pl-[10px] text-center text-[#6e6f7c]">Combo View</span>
            <svg viewBox="0 0 12 12" className="mr-1.5 size-3 shrink-0" fill="none" stroke="#777">
              <path d="M.6 4V.6H4M8 .6h3.400V4M11.400 8v3.400H8M4 11.400H.6V8M1 1l3.500 3.500M11 1 7.500 4.500M11 11 7.500 7.500M1 11l3.500-3.500" strokeWidth="1.200" />
            </svg>
            <X className="size-3" c="#85868a" w={2.2} />
          </div>
          <div className="mt-1 flex h-[33px] shrink-0">
            <div className="w-2.5 border-b border-[#2a2b35]" />
            <div className="flex w-[87px] flex-col border-x border-[#2a2b35]">
              <div className={`-mx-px h-1 ${accent}`} />
              <div className="flex flex-1 items-center justify-center pb-1">Model</div>
            </div>
            <div className="flex flex-1 items-center border-b border-[#2a2b35] pt-0.5 pl-[27px] text-[#77787c]">Tasks</div>
          </div>
          <div className="mt-[7px] flex h-[31px] shrink-0 items-center text-[#b6b6b8]">
            <span className="w-[221px] pl-[13px]">Labels &amp; Attributes</span>
            <span className="flex h-full items-center border-l border-[#35363f] pl-1.5">Description</span>
          </div>
          <div className="ml-[7px] h-[148px] w-[403px] shrink-0 rounded-b-sm bg-[#282a35]">
            <div className="flex h-5 items-center pl-[3px] tracking-[0.17px]">Application</div>
            <div className="flex h-5 items-center pl-1 font-bold">
              <TreeChev down /><Dash w="w-[5px]" /><div className="w-1" /><TIcon n="doc" /><span className="ml-1.5 tracking-[0.27px]">019_fusion360_exercise</span>
            </div>
            <div className="flex h-[21px] items-center pl-6 font-bold">
              <TreeChev down /><Dash w="w-[6px]" />
              <div className="flex h-full w-[175px] items-center bg-[#9876c8] pl-[3px]">
                <Svg n="body" className="size-4" /><span className="ml-1.5">Body</span>
              </div>
            </div>
            <div className="relative">
              <div className="absolute top-0 left-[49px] h-[74px] w-px bg-[#4c4d55]" />
              <Leaf n="origin" label="Origin" />
              <Leaf n="pad" label="Pad" />
              <Leaf n="pad" label="Pad001" />
              <Leaf n="pocket" label="Pocket" />
            </div>
          </div>
          <div className="mt-2.5 flex h-[3px] shrink-0 gap-0.5 pt-px pl-[189px]">
            {[0, 1, 2, 3, 4].map((i) => <div key={i} className="h-0.5 w-1.5 bg-[#d6d6d6]" />)}
          </div>
          <div className="mt-2.5 flex h-8 shrink-0 items-center text-[#b6b6b8]">
            <span className="w-[106px] pt-px pl-[13px]">Property</span>
            <span className="flex h-full items-center border-l border-[#35363f] pt-px pl-1.5">Value</span>
          </div>
          <div className="ml-[7px] h-[150px] w-[403px] shrink-0 rounded-b-sm bg-[#282a35]" />
        </aside>
        <div className="flex w-2.5 shrink-0 items-center justify-center pt-8">
          <div className="flex flex-col gap-0.5">
            {[0, 1, 2, 3, 4].map((i) => <div key={i} className="h-1.5 w-0.5 bg-[#d6d6d6]" />)}
          </div>
        </div>
        <Viewport />
      </div>

      <div className="flex h-[33px] shrink-0">
        <div className="flex w-[417px] shrink-0">
          <div className="w-[101px] border-t border-[#2a2b35] pt-1.5 pl-[38px] text-[#77787c]">View</div>
          <div className="flex w-[85px] flex-col border-x border-[#2a2b35]">
            <div className="flex-1 pt-[7px] text-center">Data</div>
            <div className={`h-1 ${accent}`} />
          </div>
          <div className="flex-1 border-t border-[#2a2b35]" />
        </div>
        <div className="w-2.5" />
        <div className="flex flex-1">
          <div className="flex w-[139px] items-center border-t border-[#2a2b35] pl-1.5 text-[#77787c]">
            <FcIcon /><span className="ml-2.5 w-[85px]">Start page</span><X className="size-2.5" />
          </div>
          <div className="flex w-[242px] flex-col border-x border-[#2a2b35]">
            <div className="flex flex-1 items-center pt-1 pl-[3px]">
              <FcIcon /><span className="ml-2.5 w-[192px] tracking-[0.2px]">019_fusion360_exercise : 1</span><X className="size-2.5" />
            </div>
            <div className={`h-1 ${accent}`} />
          </div>
          <div className="flex-1 border-t border-[#2a2b35]" />
        </div>
      </div>

      <footer className="flex flex-1 items-center justify-between pl-0.5">
        <span className="pt-px tracking-[0.2px]">Preselected: Unnamed.Body.Pocket.Face20 (-6.493528 mm, -37.509689 mm, 0.168721 mm)</span>
        <div className="flex items-center">
          <div className="flex h-7 w-[123px] items-center border-b border-black pt-px pl-[21px]">
            <svg viewBox="0 0 16 16" className="size-4" fill="none" stroke="#2b3031" strokeWidth="2">
              <path d="M2 6c1-4 6-5 9-3M14 10c-1 4-6 5-9 3" /><circle cx="12.500" cy="3.500" r="2" fill="#303637" /><circle cx="3" cy="12.500" r="2" fill="#303637" />
            </svg>
            <span className="ml-[5px] pt-px">Gesture</span>
          </div>
          <span className="w-[165px] pt-px pl-[11px] tracking-[-0.05px]">165.33 mm x 81.87 mm</span>
        </div>
      </footer>
    </div>
  );
}
